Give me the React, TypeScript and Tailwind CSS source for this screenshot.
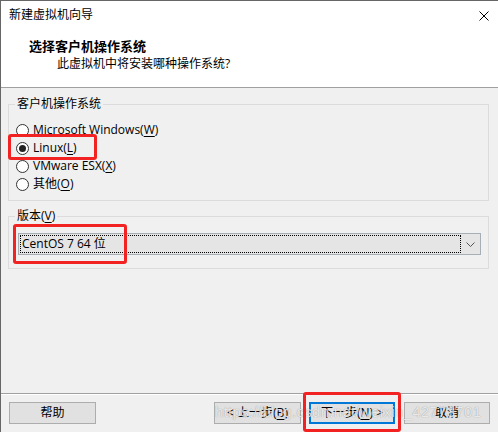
import type { ReactNode } from "react";

const font = "font-['Open_Sans','Noto_Sans_CJK_SC',sans-serif]";

function Radio({ checked, children }: { checked?: boolean; children: ReactNode }) {
  return (
    <div className="flex h-[18px] items-center gap-[4px]">
      <span className="ml-[1px] flex h-[13px] w-[13px] items-center justify-center rounded-full border border-[#333] bg-white">
        {checked && <span className="h-[7px] w-[7px] rounded-full bg-[#222]" />}
      </span>
      <span className="text-[12px] leading-[16px] text-black">{children}</span>
    </div>
  );
}

function Btn({ children, w, primary }: { children: ReactNode; w: string; primary?: boolean }) {
  return (
    <button
      type="button"
      className={
        primary
          ? "flex h-[22px] w-[86px] items-center justify-center border-2 border-[#0078d7] bg-[#e1e1e1] text-[12px] leading-[16px] text-black"
          : `flex h-[22px] ${w} items-center justify-center border border-[#adadad] bg-[#e1e1e1] text-[12px] leading-[16px] text-black`
      }
    >
      {children}
    </button>
  );
}

export default function App() {
  return (
    <div
      className={`relative flex h-[432px] w-[498px] flex-col overflow-hidden border-l border-t border-[#666] bg-[#f0f0f0] ${font}`}
    >
      {/* шапка */}
      <header className="flex flex-col border-b border-[#a0a0a0] bg-white pb-[15px]">
        <div className="flex h-[28px] items-center justify-between pl-[8px] pr-[9px]">
          <span className="text-[12px] leading-[16px] text-black">新建虚拟机向导</span>
          <svg width="10" height="10" viewBox="0 0 10 10" className="mt-[1px]">
            <path d="M0.5 0.5L9.5 9.5M9.5 0.5L0.5 9.5" stroke="#000" strokeWidth="1" fill="none" />
          </svg>
        </div>
        <div className="mt-[8px] pl-[28px] text-[13px] font-bold leading-[18px] text-black">
          选择客户机操作系统
        </div>
        <div className="mt-[1px] pl-[56px] text-[12px] leading-[16px] text-black">
          此虚拟机中将安装哪种操作系统?
        </div>
      </header>

      {/* тело */}
      <div className="flex flex-1 flex-col pl-[7px] pr-[9px]">
        <fieldset className="mt-[8px] border border-[#dcdcdc] px-[6px] pb-[7px]">
          <legend className="px-[2px] text-[12px] leading-[16px] text-black">客户机操作系统</legend>
          <div className="mt-[9px] flex flex-col">
            <Radio>
              Microsoft Windows(<span className="underline underline-offset-2">W</span>)
            </Radio>
            <Radio checked>
              Linux(<span className="underline underline-offset-2">L</span>)
            </Radio>
            <Radio>
              VMware ESX(<span className="underline underline-offset-2">X</span>)
            </Radio>
            <Radio>
              其他(<span className="underline underline-offset-2">O</span>)
            </Radio>
          </div>
        </fieldset>

        <fieldset className="mt-[7px] border border-[#dcdcdc] px-[6px] pb-[13px]">
          <legend className="px-[2px] text-[12px] leading-[16px] text-black">
            版本(<span className="underline underline-offset-2">V</span>)
          </legend>
          <div className="ml-[3px] mr-[1px] mt-[9px] flex h-[22px] items-stretch border border-[#a6aeb6] bg-[#e5e5e5] p-px">
            <div className="flex flex-1 items-center border border-dotted border-black pl-px text-[12px] leading-[16px] text-black">
              CentOS 7 64 位
            </div>
            <div className="flex w-[18px] items-center justify-center">
              <svg width="9" height="5" viewBox="0 0 9 5">
                <path d="M0.5 0.5L4.5 4.5L8.5 0.5" stroke="#555" strokeWidth="1" fill="none" />
              </svg>
            </div>
          </div>
        </fieldset>
      </div>

      {/* низ */}
      <div className="h-px bg-[#a0a0a0]" />
      <div className="h-px bg-white" />
      <div className="flex items-start pb-[8px] pl-[8px] pr-[8px] pt-[7px]">
        <Btn w="w-[87px]">帮助</Btn>
        <div className="ml-auto flex">
          <Btn w="w-[87px]">
            &lt; 上一步(<span className="underline underline-offset-2">B</span>)
          </Btn>
          <div className="ml-[8px]">
            <Btn w="w-[86px]" primary>
              下一步(<span className="underline underline-offset-2">N</span>) &gt;
            </Btn>
          </div>
          <div className="ml-[9px]">
            <Btn w="w-[86px]">取消</Btn>
          </div>
        </div>
      </div>

      {/* водяной знак */}
      <span className="pointer-events-none absolute left-[214px] top-[401px] font-['Liberation_Sans',sans-serif] text-[15px] leading-[20px] tracking-[0.3px] text-white/80 [text-shadow:0_0_1px_rgba(0,0,0,0.45)]">
        https://blog.csdn.net/weixin_42773701
      </span>

      {/* красные рамки */}
      <div className="pointer-events-none absolute left-[7px] top-[133px] h-[26px] w-[89px] rounded-[3px] border-[3px] border-[#f22222]" />
      <div className="pointer-events-none absolute left-[12px] top-[223px] h-[40px] w-[114px] rounded-[3px] border-[3px] border-[#f22222]" />
      <div className="pointer-events-none absolute left-[302px] top-[391px] h-[40px] w-[98px] rounded-[3px] border-[3px] border-[#f22222]" />
    </div>
  );
}
